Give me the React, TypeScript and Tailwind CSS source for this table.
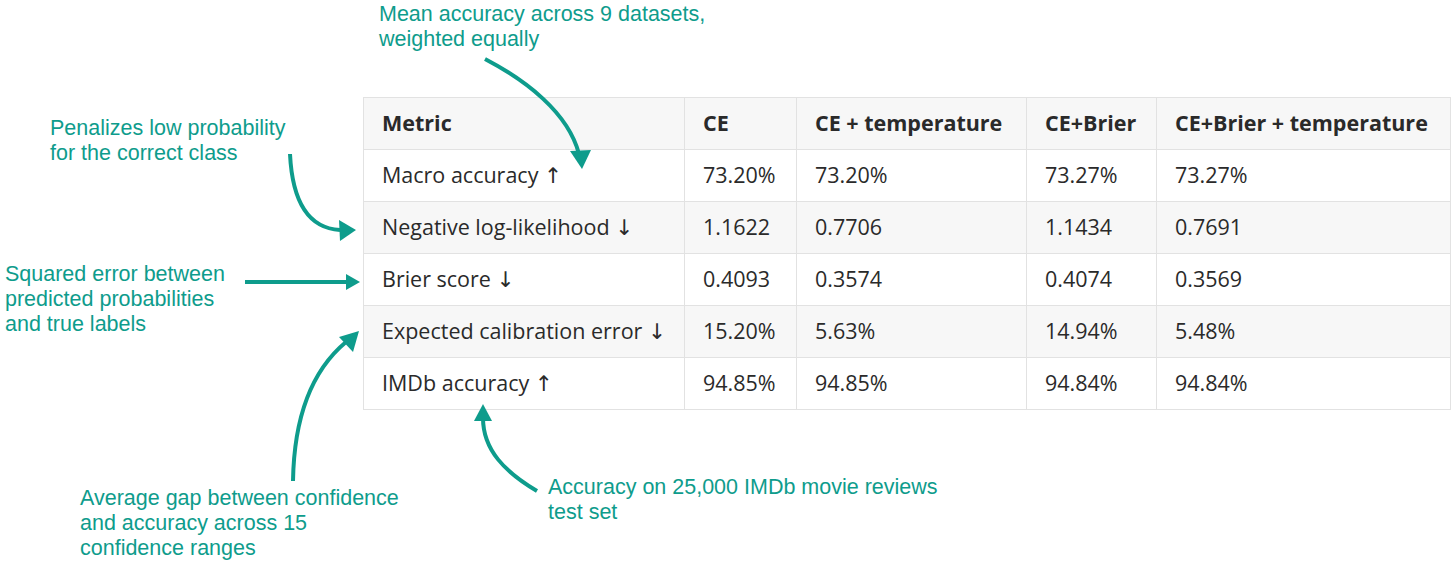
const teal = "#0e9c8c";

const headers = ["Metric", "CE", "CE + temperature", "CE+Brier", "CE+Brier + temperature"];
const colWidths = ["w-[319px]", "w-[112px]", "w-[230px]", "w-[130px]", "w-[294px]"];

const rows = [
  [["Macro accuracy", "↑"], "73.20%", "73.20%", "73.27%", "73.27%"],
  [["Negative log-likelihood", "↓"], "1.1622", "0.7706", "1.1434", "0.7691"],
  [["Brier score", "↓"], "0.4093", "0.3574", "0.4074", "0.3569"],
  [["Expected calibration error", "↓"], "15.20%", "5.63%", "14.94%", "5.48%"],
  [["IMDb accuracy", "↑"], "94.85%", "94.85%", "94.84%", "94.84%"],
] as const;

const notes = [
  { text: ["Mean accuracy across 9 datasets,", "weighted equally"], cls: "left-[379px] top-[2px]" },
  { text: ["Penalizes low probability", "for the correct class"], cls: "left-[50px] top-[116px]" },
  { text: ["Squared error between", "predicted probabilities", "and true labels"], cls: "left-[5px] top-[262px]" },
  { text: ["Average gap between confidence", "and accuracy across 15", "confidence ranges"], cls: "left-[80px] top-[486px]" },
  { text: ["Accuracy on 25,000 IMDb movie reviews", "test set"], cls: "left-[548px] top-[475px]" },
];

function Arrows() {
  return (
    <svg
      className="absolute left-0 top-0 pointer-events-none"
      width="1456"
      height="565"
      viewBox="0 0 1456 565"
      fill="none"
    >
      <g stroke={teal} strokeWidth="4" strokeLinecap="butt">
        <path d="M485 59 C525 80 568 112 579 154" />
        <path d="M290 154 C292 195 305 228 340 230" />
        <path d="M245 282 L348 282" />
        <path d="M293 481 C294 420 310 372 346 342" />
        <path d="M537 491 C505 472 483 450 483 418" />
      </g>
      <g fill={teal}>
        <polygon points="582,169 570,151 591,150" />
        <polygon points="356,230 339,220 340,241" />
        <polygon points="360,282 346,274 346,290" />
        <polygon points="359,331 339,337 353,352" />
        <polygon points="483,404 474,421 492,421" />
      </g>
    </svg>
  );
}

export default function App() {
  return (
    <div className="relative w-[1456px] h-[565px] bg-white overflow-hidden">
      <div className="pl-[363px] pt-[97px]">
        <table className="table-fixed border-collapse text-[21.5px] text-[#2a2a2a] font-['Open_Sans','Noto_Sans',sans-serif]">
          <thead>
            <tr className="bg-[#f7f7f7] h-[52px]">
              {headers.map((h, i) => (
                <th
                  key={h}
                  className={`${colWidths[i]} border border-[#e2e2e2] px-[18px] text-left font-bold`}
                >
                  {h}
                </th>
              ))}
            </tr>
          </thead>
          <tbody>
            {rows.map((r, ri) => (
              <tr key={r[0][0]} className={`h-[52px] ${ri % 2 === 1 ? "bg-[#f7f7f7]" : "bg-white"}`}>
                <td className="border border-[#e2e2e2] px-[18px] text-left font-normal whitespace-nowrap">
                  {r[0][0]}{" "}
                  <span className="font-['DejaVu_Sans'] text-[#2a2a2a]">{r[0][1]}</span>
                </td>
                {r.slice(1).map((c, ci) => (
                  <td key={ci} className="border border-[#e2e2e2] px-[18px] text-left font-normal">
                    {c as string}
                  </td>
                ))}
              </tr>
            ))}
          </tbody>
        </table>
      </div>

      {notes.map((n) => (
        <div
          key={n.text[0]}
          className={`absolute ${n.cls} text-[21.5px] leading-[25px] whitespace-nowrap text-[#0e9c8c] font-['Liberation_Sans',Arial,sans-serif]`}
        >
          {n.text.map((t) => (
            <div key={t}>{t}</div>
          ))}
        </div>
      ))}

      <Arrows />
    </div>
  );
}
